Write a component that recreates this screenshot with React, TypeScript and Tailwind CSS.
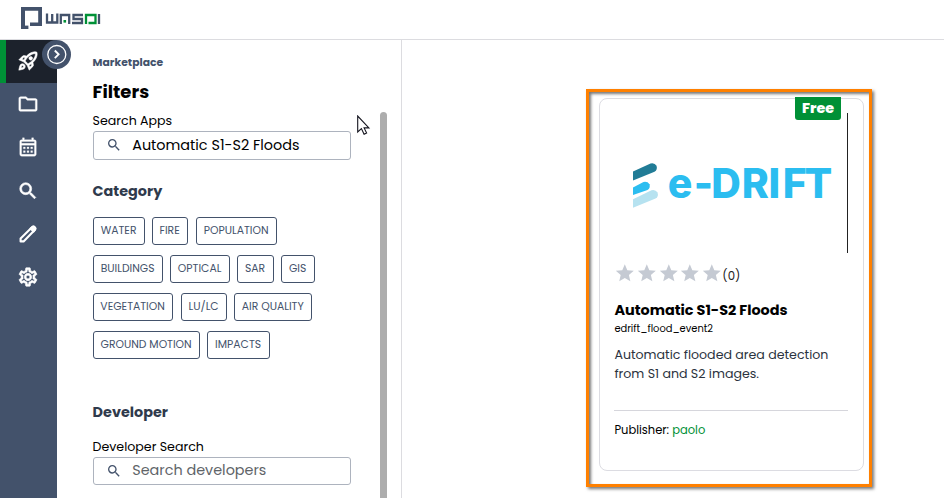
import type { ReactNode } from "react";
import {
  MdOutlineRocketLaunch,
  MdOutlineFolder,
  MdOutlineCalendarMonth,
  MdSearch,
  MdOutlineSettings,
  MdStar,
} from "react-icons/md";

function WasdiLogo() {
  return (
    <svg width="80" height="23" viewBox="0 0 80 23" fill="none">
      <g fill="#43526b">
        <path d="M0 0h21v19H9v-3.6h8.2V3.8H4V22H0z" />
        <path d="M4 18.6h3.4V22H4z" />
      </g>
      <g stroke="#43526b" strokeWidth="2.3">
        <path d="M26 6.500v9h10.300v-9M31.200 7v8.500" />
        <path d="M39.800 17V8h8.400v9" />
        <path d="M62 8h-9.500v4h8.500v4h-10" />
        <path d="M78 7v10" />
      </g>
      <path d="M42.5 13h2.6v2.6h-2.6z" fill="#009036" />
      <path d="M65 17V8h9.500v8h-7" stroke="#009036" strokeWidth="2.3" />
    </svg>
  );
}

function Pencil() {
  return (
    <svg width="22" height="22" viewBox="0 0 22 22" fill="none" stroke="white" strokeWidth="2.1" strokeLinejoin="round">
      <path d="M3.6 18.4v-3L15.5 3.8q.9-.8 1.8 0l.9.9q.8.9 0 1.8L6.6 18.4z" />
      <path d="M13.6 5.6l2.9 2.9 1.4-1.8-2.4-2.5z" fill="white" />
    </svg>
  );
}

function NavItem({ active, children }: { active?: boolean; children: ReactNode }) {
  return (
    <div
      className={`flex h-[43.2px] items-center justify-center border-l-[6px] pr-[7px] pb-px text-[22px] text-white [&_path[fill=none]]:stroke-none ${
        active ? "border-[#009036] bg-[#1c222c]" : "border-transparent"
      }`}
    >
      {children}
    </div>
  );
}

function SearchBox({ height, children }: { height: string; children: ReactNode }) {
  return (
    <div className={`flex w-[258px] items-center rounded-[3px] border border-[#adb3be] pl-[12px] ${height}`}>
      <MdSearch className="mr-[10.6px] mb-px text-[16px] text-[#43526b]" />
      {children}
    </div>
  );
}

function Chip({ label, width }: { label: string; width: string }) {
  return (
    <div
      className={`flex h-7 items-center justify-center rounded-[3px] border border-[#43526b] text-[10.8px] leading-[26px] whitespace-nowrap text-[#43526b] ${width}`}
    >
      {label}
    </div>
  );
}

function DriftLogo() {
  return (
    <svg width="200" height="56" viewBox="0 0 200 56" overflow="visible">
      <path d="M0 19.500v-9L17.500 2.400q4.200-1 6 2.400q1.300 4-2 6z" fill="#217c96" />
      <path d="M0 34v-7.500L10.500 21q4-.8 6 2.300q1 4-2 5.700z" fill="#2bbdf0" />
      <path d="M0 46.800v-8.600L18.500 29.200q4-1 6 2.300q1.500 4-2 6z" fill="#b6e2f0" />
      <text
        x="34.800 60.800 78.200 108.800 135.600 149.800 171.400"
        y="37"
        fill="#2bbdf0"
        className="font-['Inter',sans-serif] text-[41px] leading-none font-extrabold"
      >
        e-DRIFT
      </text>
    </svg>
  );
}

export default function App() {
  return (
    <div className="flex h-[498px] w-[944px] flex-col overflow-hidden bg-white font-['Poppins','Inter',sans-serif] text-black">
      <header className="h-10 shrink-0 border-b border-[#dcdce0] pt-[7px] pl-[21px]">
        <WasdiLogo />
      </header>
      <div className="flex min-h-0 flex-1">
        <nav className="relative w-[57px] shrink-0 bg-[#43526b]">
          <NavItem active><MdOutlineRocketLaunch className="stroke-[0.6]" /></NavItem>
          <NavItem><MdOutlineFolder className="stroke-[0.4]" /></NavItem>
          <NavItem><MdOutlineCalendarMonth className="stroke-[0.3]" /></NavItem>
          <NavItem><MdSearch className="stroke-[0.7]" /></NavItem>
          <NavItem><Pencil /></NavItem>
          <NavItem><MdOutlineSettings className="stroke-[0.7]" /></NavItem>
          <svg className="absolute top-0 left-[42px]" width="30" height="30" fill="none">
            <circle cx="14.500" cy="14.500" r="14.500" fill="#43526b" />
            <circle cx="14.800" cy="14.500" r="9" stroke="white" strokeWidth="1.300" />
            <path d="M12.800 10.500l3.800 3.800-3.800 3.800" stroke="white" strokeWidth="1.900" />
          </svg>
        </nav>

        <aside className="flex w-[345px] shrink-0 border-r border-[#dcdce0] pl-[35.6px]">
          <div className="w-[260px] shrink-0 whitespace-nowrap">
            <div className="pt-[15px] text-[10.8px] leading-4 font-bold text-[#43526b]">Marketplace</div>
            <h1 className="mt-[9px] text-[18px] leading-6 font-bold">Filters</h1>
            <div className="mt-[9px] mb-[2px] text-[12.6px] leading-4">Search Apps</div>
            <SearchBox height="h-[29px]"><span className="text-[14.4px]">Automatic S1-S2 Floods</span></SearchBox>
            <h2 className="mt-[21px] mb-[16px] text-[14.4px] leading-5 font-bold text-[#2f3a4c]">Category</h2>
            <div className="flex flex-col gap-[10px]">
              <div className="flex gap-[7px]">
                <Chip label="WATER" width="w-[52px]" />
                <Chip label="FIRE" width="w-[36px]" />
                <Chip label="POPULATION" width="w-[81px] ml-px" />
              </div>
              <div className="flex gap-[7px]">
                <Chip label="BUILDINGS" width="w-[70px]" />
                <Chip label="OPTICAL" width="w-[60px]" />
                <Chip label="SAR" width="w-[37px]" />
                <Chip label="GIS" width="w-[34px]" />
              </div>
              <div className="flex gap-[7px]">
                <Chip label="VEGETATION" width="w-[80px]" />
                <Chip label="LU/LC" width="w-[46px] ml-px" />
                <Chip label="AIR QUALITY" width="w-[78.4px]" />
              </div>
              <div className="flex gap-[7px]">
                <Chip label="GROUND MOTION" width="w-[107px]" />
                <Chip label="IMPACTS" width="w-[63px]" />
              </div>
            </div>
            <h2 className="mt-[43px] text-[14.4px] leading-5 font-bold text-[#2f3a4c]">Developer</h2>
            <div className="mt-[17px] mb-[2px] text-[12.6px] leading-4">Developer Search</div>
            <SearchBox height="h-[28px]">
              <span className="pb-px text-[14.4px] text-[#606468]">Search developers</span>
            </SearchBox>
          </div>
          <svg className="mt-[75px] ml-[4.4px] shrink-0" width="14" height="20" fill="white" stroke="#15151f" strokeWidth="1.100">
            <path d="M.700 1v16l3.700-3.400 2.700 5.700 2.500-1.200-2.500-5.200h4.800z" />
          </svg>
          <div className="mt-[72px] ml-[9px] w-[7px] rounded-t-full bg-[#adadad]" />
        </aside>

        <main className="flex-1 pt-[49px] pl-[184px]">
          <div className="h-[398px] w-[286px] border-[3px] border-[#ff8000] pt-[6px] pl-[10px] shadow-[2px_2px_3px_#0008,inset_2px_2px_3px_#0008]">
            <article className="relative h-[373px] w-[265px] rounded-lg border border-[#dcdce2] px-[14.4px] pt-[14px]">
              <div className="absolute -top-[2px] left-[195px] flex h-[23px] w-[46px] items-center justify-center rounded-b-[3px] bg-[#009036] text-[14.4px] font-extrabold text-white">
                Free
              </div>
              <div className="h-[140px] w-[233.6px] border-r border-[#222] pt-[48px] pl-[18.6px]">
                <DriftLogo />
              </div>
              <div className="mt-[9px] flex h-[22px] items-center text-[#c5cad3]">
                {[0, 1, 2, 3, 4].map((i) => (
                  <MdStar key={i} className="h-[22.4px] w-[21.6px] shrink-0" />
                ))}
                <span className="mt-[7px] text-[11.7px] text-[#222]">(0)</span>
              </div>
              <h3 className="mt-[16px] text-[14.4px] leading-5 font-bold whitespace-nowrap">Automatic S1-S2 Floods</h3>
              <div className="mt-[1px] text-[9.9px] leading-4">edrift_flood_event2</div>
              <p className="mt-[9px] h-[38px] text-[12.6px] leading-[18.9px] whitespace-nowrap text-[#2b3340]">
                Automatic flooded area detection<br />from S1 and S2 images.
              </p>
              <div className="mt-[26px] w-[234px] border-t border-[#d6d6dc] pt-[11px] text-[11.5px] leading-4">
                Publisher: <span className="text-[#009036]">paolo</span>
              </div>
            </article>
          </div>
        </main>
      </div>
    </div>
  );
}
